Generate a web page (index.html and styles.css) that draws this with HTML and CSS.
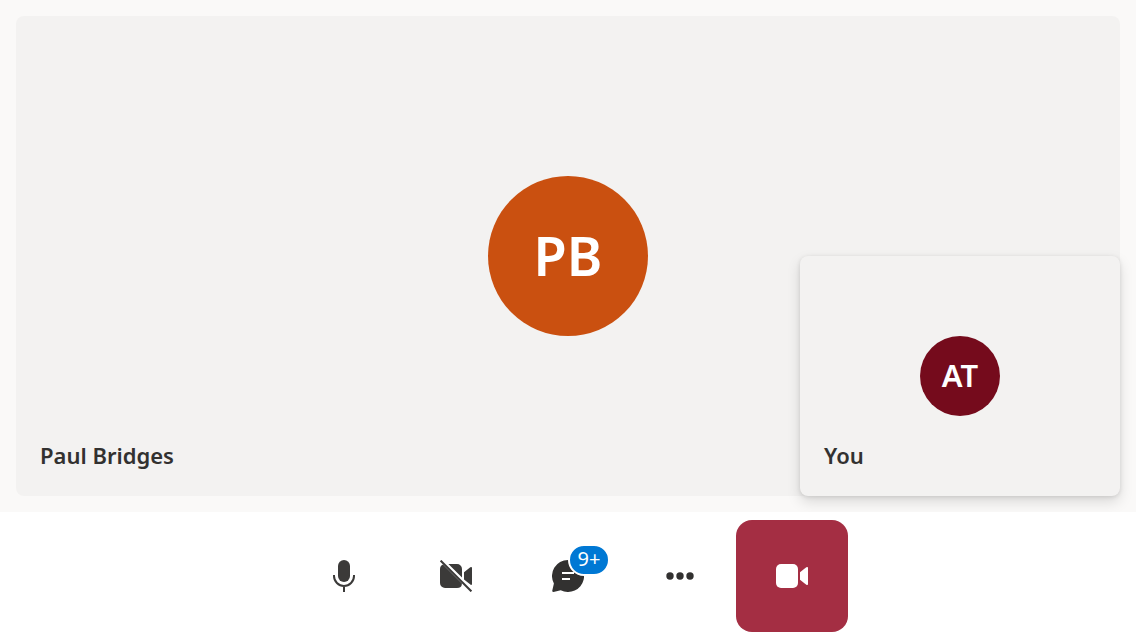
FILE: index.html
```html
<!DOCTYPE html>
<html lang="en">
<head>
<meta charset="utf-8">
<meta name="viewport" content="width=device-width, initial-scale=1">
<title>Call</title>
<link rel="stylesheet" href="styles.css">
</head>
<body>
<main class="call">
  <section class="stage" aria-label="Participants">
    <article class="tile">
      <div class="avatar avatar-large">PB</div>
      <p class="name">Paul Bridges</p>
    </article>
    <article class="tile tile-local">
      <div class="avatar avatar-small">AT</div>
      <p class="name">You</p>
    </article>
  </section>
  <nav class="controls" aria-label="Call controls">
    <button class="control control-device" type="button" aria-label="Mute">
      <svg class="icon" viewBox="0 0 32 32" aria-hidden="true">
        <rect x="10" y="0" width="12" height="22" rx="6" fill="currentColor"/>
        <path d="M6 15v1a10 10 0 0 0 20 0v-1M16 26v6" fill="none" stroke="currentColor" stroke-width="2"/>
      </svg>
    </button>
    <button class="control control-device" type="button" aria-label="Turn camera on">
      <svg class="icon" viewBox="0 0 32 32" aria-hidden="true">
        <path d="M3 4.400 22 23.400A5 5 0 0 1 17 28H5a5 5 0 0 1-5-5V9a5 5 0 0 1 3-4.600ZM8.400 4H17a5 5 0 0 1 5 5v8.600ZM24 12.200 30.300 7.300Q32 6.400 32 8.200V24.500L31 25.100 24 19.600Z" fill="currentColor"/>
        <path d="M.6.600 31.400 31.400" stroke="currentColor" stroke-width="2"/>
      </svg>
    </button>
    <button class="control" type="button" aria-label="Chat, more than 9 unread messages">
      <span class="badge-anchor">
        <svg class="icon" viewBox="0 0 32 32" aria-hidden="true">
          <path d="M16 0a16 16 0 1 1-7.300 30.200L1.500 32Q0 32 .3 30.500L1.900 23.600A16 16 0 0 1 16 0Z" fill="currentColor"/>
          <path d="M10 13h12M10 19h8" stroke="#fff" stroke-width="2"/>
        </svg>
        <span class="badge">9+</span>
      </span>
    </button>
    <button class="control" type="button" aria-label="More options">
      <svg class="icon" viewBox="0 0 32 32" fill="currentColor" aria-hidden="true">
        <circle cx="6" cy="16" r="3.700"/><circle cx="16" cy="16" r="3.700"/><circle cx="26" cy="16" r="3.700"/>
      </svg>
    </button>
    <button class="control control-end" type="button" aria-label="End video call">
      <svg class="icon" viewBox="0 0 32 32" fill="currentColor" aria-hidden="true">
        <rect x="0" y="4" width="22" height="24" rx="5"/>
        <path d="M24 12.200 30.300 7.300Q32 6.200 32 8V24Q32 25.800 30.300 24.700L24 19.800Z"/>
      </svg>
    </button>
  </nav>
</main>
</body>
</html>
```
FILE: styles.css
```css
* {
  box-sizing: border-box;
}

body {
  margin: 0;
  background: #fff;
  color: #323130;
  font-family: "Segoe UI", "Noto Sans", sans-serif;
}

.call {
  display: flex;
  flex-direction: column;
  min-height: 100vh;
}

.stage {
  position: relative;
  display: flex;
  flex: 1;
  padding: 16px;
  overflow: hidden;
  background: #faf9f8;
}

.tile {
  display: grid;
  grid-template-rows: 1fr auto 1fr;
  flex: 1;
  padding: 24px;
  border-radius: 8px;
  background: #f3f2f1;
}

.tile-local {
  position: absolute;
  right: 16px;
  bottom: 16px;
  width: 320px;
  height: 240px;
  box-shadow: 0 6px 14px rgba(0, 0, 0, 0.13), 0 1px 4px rgba(0, 0, 0, 0.11);
}

.avatar {
  display: flex;
  grid-row: 2;
  align-items: center;
  justify-content: center;
  justify-self: center;
  padding-bottom: 3px;
  border-radius: 50%;
  color: #fff;
  font-weight: 600;
}

.avatar-large {
  width: 160px;
  height: 160px;
  background: #ca5010;
  font-size: 54px;
}

.avatar-small {
  width: 80px;
  height: 80px;
  background: #750b1c;
  font-size: 31px;
}

.name {
  grid-row: 3;
  align-self: end;
  margin: 0;
  font-size: 22px;
  font-weight: 600;
  line-height: 34px;
}

.controls {
  display: flex;
  justify-content: center;
  padding: 8px;
}

.control {
  display: flex;
  align-items: center;
  justify-content: center;
  width: 112px;
  height: 112px;
  padding: 0;
  border: 0;
  border-radius: 16px;
  background: transparent;
  color: #323130;
  font: inherit;
  cursor: pointer;
}

.control-device {
  color: #3b3a39;
}

.control-end {
  background: #a42e43;
  color: #fff;
}

.icon {
  display: block;
  width: 32px;
  height: 32px;
}

.badge-anchor {
  position: relative;
}

.badge {
  position: absolute;
  top: -16px;
  left: 16px;
  width: 42px;
  height: 32px;
  border: 2px solid #fff;
  border-radius: 16px;
  background: #0078d4;
  color: #fff;
  font-size: 20px;
  line-height: 26px;
  text-align: center;
}
```
